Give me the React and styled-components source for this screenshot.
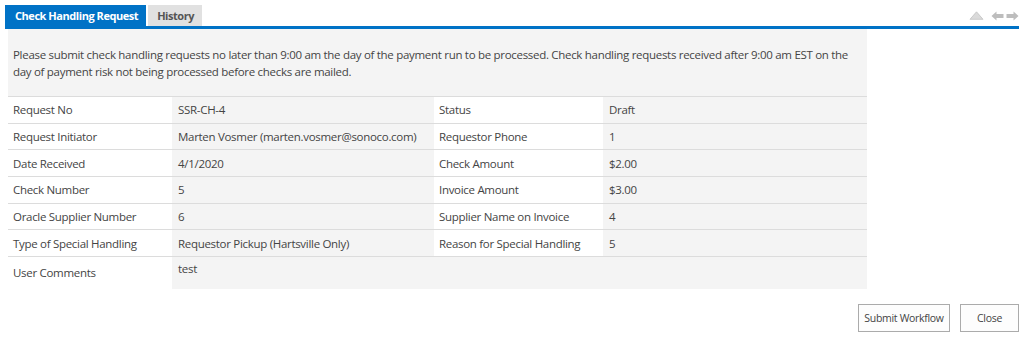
import React from 'react';
import styled, { createGlobalStyle } from 'styled-components';

const GlobalStyle = createGlobalStyle`
  body {
    margin: 0;
    background: #fff;
    font-family: "Open Sans", "Noto Sans", sans-serif;
    color: #444;
  }
`;

const Page = styled.div`
  padding: 3px 5px 0 5px;
`;

const TabBar = styled.div`
  display: flex;
  align-items: flex-end;
  border-bottom: 3px solid #0072c6;
`;

const Tab = styled.div`
  height: 21px;
  line-height: 21px;
  padding: 0 8px 0 ${({ active }) => (active ? '10px' : '9px')};
  margin-right: 2px;
  font-size: 11px;
  font-weight: 700;
  letter-spacing: -0.45px;
  background: ${({ active }) => (active ? '#0072c6' : '#e1e1e1')};
  color: ${({ active }) => (active ? '#fff' : '#555')};
`;

const NavIcons = styled.div`
  margin-left: auto;
  display: flex;
  align-items: center;
  gap: 2px;
  height: 21px;
  padding-top: 2px;
`;

const Panel = styled.div`
  width: 859px;
  margin-left: 3px;
  background: #f4f4f4;
`;

const Notice = styled.p`
  margin: 0;
  padding: 17px 5px 16px;
  font-size: 11.5px;
  letter-spacing: -0.3px;
  line-height: 17px;
  border-bottom: 1px solid #dcdcdc;
`;

const Grid = styled.div`
  display: grid;
  grid-template-columns: 164px 262px 169px 1fr;
`;

const Cell = styled.div`
  display: flex;
  align-items: ${({ top }) => (top ? 'flex-start' : 'center')};
  min-height: ${({ tall }) => (tall ? '32px' : '26.67px')};
  padding: ${({ top }) => (top ? '4px 6px 0' : '0 5px')};
  padding-left: ${({ label }) => (label ? '5px' : '6px')};
  box-sizing: border-box;
  font-size: 11.5px;
  letter-spacing: -0.3px;
  background: ${({ label }) => (label ? '#fff' : 'transparent')};
  border-bottom: ${({ last }) => (last ? 'none' : '1px solid #dcdcdc')};
  grid-column: ${({ span }) => span || 'auto'};
`;

const Actions = styled.div`
  display: flex;
  justify-content: flex-end;
  gap: 10px;
  margin-top: 15px;
`;

const Button = styled.button`
  height: 28px;
  width: ${({ wide }) => (wide ? '92px' : '59px')};
  padding: 0;
  border: 1px solid #ababab;
  background: #fdfdfd;
  color: #444;
  font-family: "Open Sans", "Noto Sans", sans-serif;
  font-size: 10.5px;
  letter-spacing: -0.3px;
`;

const rows = [
  ['Request No', 'SSR-CH-4', 'Status', 'Draft'],
  ['Request Initiator', 'Marten Vosmer (marten.vosmer@sonoco.com)', 'Requestor Phone', '1'],
  ['Date Received', '4/1/2020', 'Check Amount', '$2.00'],
  ['Check Number', '5', 'Invoice Amount', '$3.00'],
  ['Oracle Supplier Number', '6', 'Supplier Name on Invoice', '4'],
  ['Type of Special Handling', 'Requestor Pickup (Hartsville Only)', 'Reason for Special Handling', '5'],
];

const Icons = () => (
  <NavIcons>
    <svg width="15" height="9" viewBox="0 0 15 9" style={{ marginRight: 5 }}>
      <path d="M7.5 0.8 L14 8.3 L1 8.3 Z" fill="#dadada" stroke="#c2c2c2" strokeWidth="0.8" />
    </svg>
    <svg width="13" height="10" viewBox="0 0 13 10">
      <path d="M0.5 5 L5.5 0.5 L5.5 3 L12.5 3 L12.5 7 L5.5 7 L5.5 9.5 Z" fill="#bdbdbd" />
    </svg>
    <svg width="13" height="10" viewBox="0 0 13 10">
      <path d="M12.5 5 L7.5 0.5 L7.5 3 L0.5 3 L0.5 7 L7.5 7 L7.5 9.5 Z" fill="#bdbdbd" />
    </svg>
  </NavIcons>
);

export default function App() {
  return (
    <Page>
      <GlobalStyle />
      <TabBar>
        <Tab active>Check Handling Request</Tab>
        <Tab>History</Tab>
        <Icons />
      </TabBar>
      <Panel>
        <Notice>
          Please submit check handling requests no later than 9:00 am the day of the payment run to be
          processed. Check handling requests received after 9:00 am EST on the day of payment risk not
          being processed before checks are mailed.
        </Notice>
        <Grid>
          {rows.map(([l1, v1, l2, v2]) => (
            <React.Fragment key={l1}>
              <Cell label>{l1}</Cell>
              <Cell>{v1}</Cell>
              <Cell label>{l2}</Cell>
              <Cell>{v2}</Cell>
            </React.Fragment>
          ))}
          <Cell label last tall>User Comments</Cell>
          <Cell last tall top span="2 / 5">test</Cell>
        </Grid>
      </Panel>
      <Actions>
        <Button wide>Submit Workflow</Button>
        <Button>Close</Button>
      </Actions>
    </Page>
  );
}
